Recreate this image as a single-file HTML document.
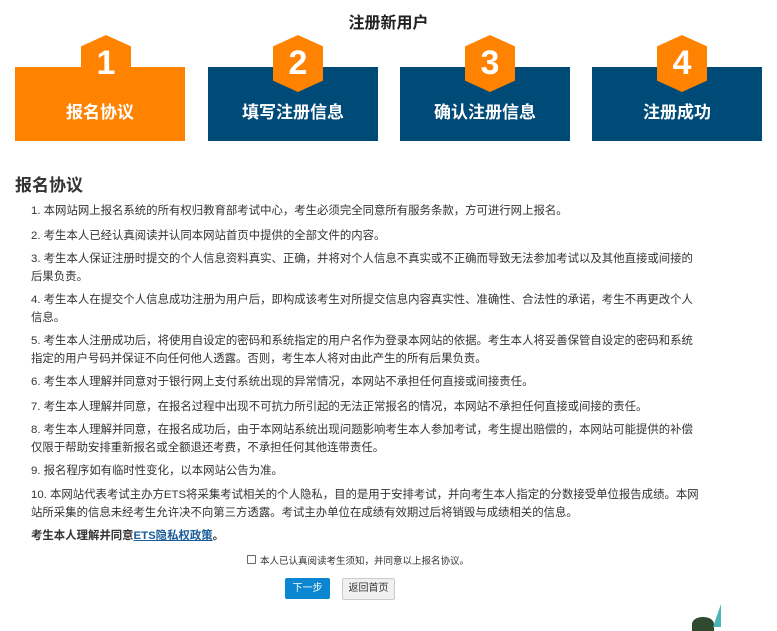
<!DOCTYPE html>
<html><head><meta charset="utf-8"><style>
*{margin:0;padding:0;box-sizing:border-box}
body{width:777px;height:627px;background:#fff;position:relative;overflow:hidden;font-family:"Liberation Sans","Noto Sans CJK SC",sans-serif;color:#333}
.t{position:absolute;font-size:11.4px;line-height:18px;left:31px;white-space:nowrap;color:#333}
.box{position:absolute;top:67px;width:170px;height:74px;background:#004a78;color:#fff;font-weight:bold;font-size:17px;text-align:center;padding-top:31px}
.hex{position:absolute;top:35px;width:50px;height:57px;background:#ff8200;clip-path:polygon(50% 0,100% 20%,100% 80%,50% 100%,0 80%,0 20%);color:#fff;font-size:34px;font-weight:bold;text-align:center;line-height:57px;font-family:"Liberation Sans",sans-serif}
</style></head><body>
<div style="position:absolute;top:9px;left:0;width:777px;text-align:center;font-size:16px;font-weight:bold;color:#222">注册新用户</div>
<div class="box" style="left:15px;background:#ff8200">报名协议</div>
<div class="box" style="left:208px">填写注册信息</div>
<div class="box" style="left:400px">确认注册信息</div>
<div class="box" style="left:592px">注册成功</div>
<div class="hex" style="left:81px">1</div>
<div class="hex" style="left:273px">2</div>
<div class="hex" style="left:465px">3</div>
<div class="hex" style="left:657px">4</div>
<div style="position:absolute;left:15px;top:171px;font-size:17px;font-weight:bold;color:#333">报名协议</div>
<div class="t" style="top:202px">1. 本网站网上报名系统的所有权归教育部考试中心，考生必须完全同意所有服务条款，方可进行网上报名。</div>
<div class="t" style="top:227px">2. 考生本人已经认真阅读并认同本网站首页中提供的全部文件的内容。</div>
<div class="t" style="top:250px">3. 考生本人保证注册时提交的个人信息资料真实、正确，并将对个人信息不真实或不正确而导致无法参加考试以及其他直接或间接的<br>后果负责。</div>
<div class="t" style="top:291px">4. 考生本人在提交个人信息成功注册为用户后，即构成该考生对所提交信息内容真实性、准确性、合法性的承诺，考生不再更改个人<br>信息。</div>
<div class="t" style="top:332px">5. 考生本人注册成功后，将使用自设定的密码和系统指定的用户名作为登录本网站的依据。考生本人将妥善保管自设定的密码和系统<br>指定的用户号码并保证不向任何他人透露。否则，考生本人将对由此产生的所有后果负责。</div>
<div class="t" style="top:373px">6. 考生本人理解并同意对于银行网上支付系统出现的异常情况，本网站不承担任何直接或间接责任。</div>
<div class="t" style="top:398px">7. 考生本人理解并同意，在报名过程中出现不可抗力所引起的无法正常报名的情况，本网站不承担任何直接或间接的责任。</div>
<div class="t" style="top:421px">8. 考生本人理解并同意，在报名成功后，由于本网站系统出现问题影响考生本人参加考试，考生提出赔偿的，本网站可能提供的补偿<br>仅限于帮助安排重新报名或全额退还考费，不承担任何其他连带责任。</div>
<div class="t" style="top:462px">9. 报名程序如有临时性变化，以本网站公告为准。</div>
<div class="t" style="top:486px">10. 本网站代表考试主办方ETS将采集考试相关的个人隐私，目的是用于安排考试，并向考生本人指定的分数接受单位报告成绩。本网<br>站所采集的信息未经考生允许决不向第三方透露。考试主办单位在成绩有效期过后将销毁与成绩相关的信息。</div>
<div class="t" style="top:527px;font-weight:bold">考生本人理解并同意<span style="color:#1a5c9a;text-decoration:underline">ETS隐私权政策</span>。</div>
<div style="position:absolute;left:247px;top:555px;width:9px;height:9px;border:1px solid #666;border-radius:1px"></div>
<div style="position:absolute;left:260px;top:553px;font-size:9.5px;color:#333;white-space:nowrap">本人已认真阅读考生须知，并同意以上报名协议。</div>
<div style="position:absolute;left:285px;top:578px;width:45px;height:21px;background:#0a87d0;border-radius:2px;color:#fff;font-size:10px;text-align:center;line-height:21px">下一步</div>
<div style="position:absolute;left:342px;top:578px;width:53px;height:22px;background:#f0f0f0;border:1px solid #ccc;border-radius:2px;color:#333;font-size:10px;text-align:center;line-height:20px">返回首页</div>
<div style="position:absolute;left:692px;top:617px;width:22px;height:14px;background:#2f4a2f;border-radius:50% 50% 0 0"></div>
<div style="position:absolute;left:713px;top:604px;width:8px;height:23px;background:#4bb5b5;clip-path:polygon(100% 0,100% 100%,0 100%)"></div>
</body></html>
